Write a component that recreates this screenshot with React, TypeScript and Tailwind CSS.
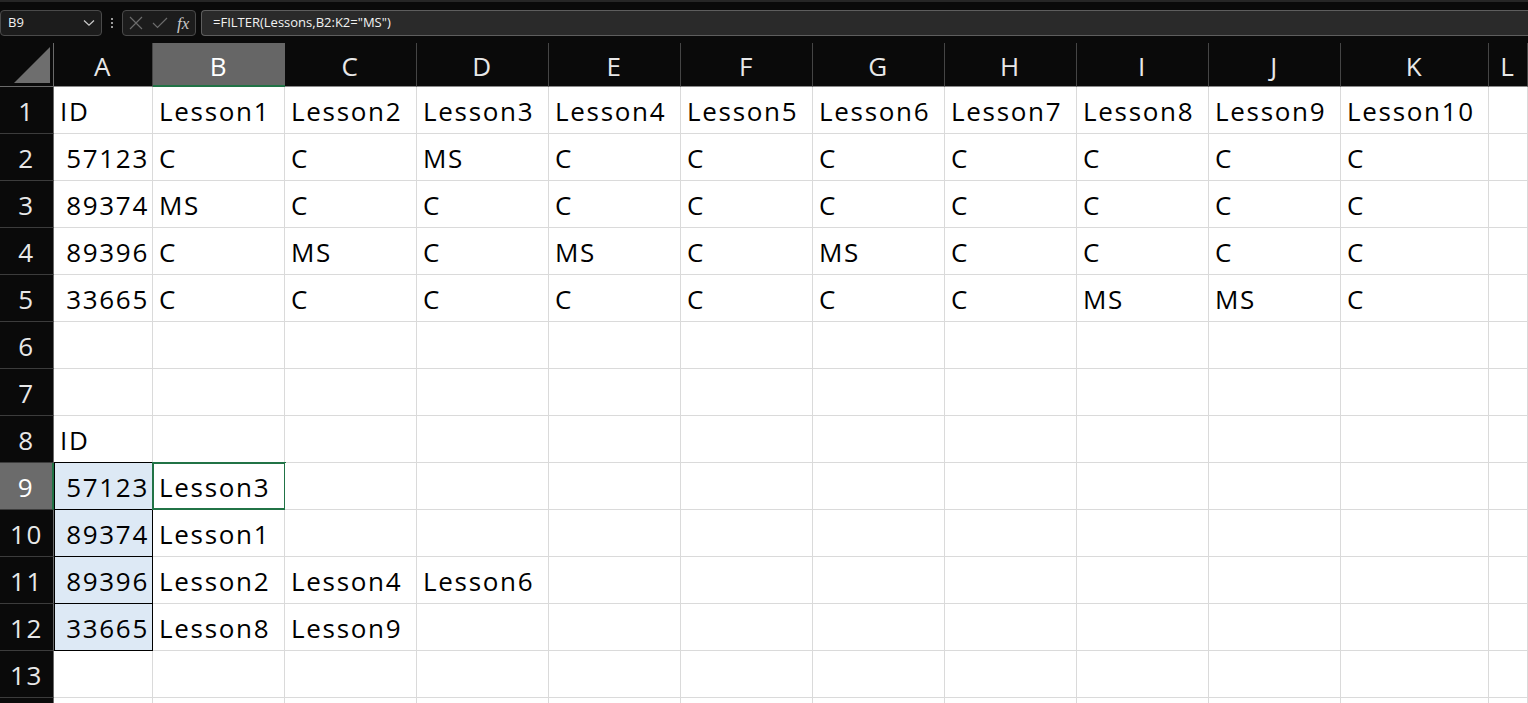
import React from "react";

const cols = ["A", "B", "C", "D", "E", "F", "G", "H", "I", "J", "K", "L"];

type Cell = { v: string; num?: boolean };

const data: Record<number, Cell[]> = {
  1: [{ v: "ID" }, ...Array.from({ length: 10 }, (_, i) => ({ v: `Lesson${i + 1}` }))],
  2: ["57123", "C", "C", "MS", "C", "C", "C", "C", "C", "C", "C"].map((v, i) => ({ v, num: i === 0 })),
  3: ["89374", "MS", "C", "C", "C", "C", "C", "C", "C", "C", "C"].map((v, i) => ({ v, num: i === 0 })),
  4: ["89396", "C", "MS", "C", "MS", "C", "MS", "C", "C", "C", "C"].map((v, i) => ({ v, num: i === 0 })),
  5: ["33665", "C", "C", "C", "C", "C", "C", "C", "MS", "MS", "C"].map((v, i) => ({ v, num: i === 0 })),
  8: [{ v: "ID" }],
  9: [{ v: "57123", num: true }, { v: "Lesson3" }],
  10: [{ v: "89374", num: true }, { v: "Lesson1" }],
  11: [{ v: "89396", num: true }, { v: "Lesson2" }, { v: "Lesson4" }, { v: "Lesson6" }],
  12: [{ v: "33665", num: true }, { v: "Lesson8" }, { v: "Lesson9" }],
};

const rows = Array.from({ length: 14 }, (_, i) => i + 1);
const spill = [9, 10, 11, 12];

function FormulaBar() {
  return (
    <div className="flex h-[41px] shrink-0 items-start pt-[8px] font-['Open_Sans',sans-serif] text-[13px] text-[#f2f2f2]">
      {/* name box */}
      <div className="flex h-[26px] w-[102px] items-center justify-between rounded-[4px] border border-[#4a4a4a] bg-[#1c1c1c] pl-[7px] pr-[6px]">
        <span>B9</span>
        <svg width="12" height="8" viewBox="0 0 12 8" fill="none" stroke="#c8c8c8" strokeWidth="1.3">
          <path d="M1 1.5 L6 6.2 L11 1.5" />
        </svg>
      </div>
      {/* vertical dots */}
      <div className="flex h-[26px] w-[20px] flex-col items-center justify-center gap-[2px]">
        <span className="h-[2px] w-[2px] bg-[#9a9a9a]" />
        <span className="h-[2px] w-[2px] bg-[#9a9a9a]" />
        <span className="h-[2px] w-[2px] bg-[#9a9a9a]" />
      </div>
      {/* cancel / enter / fx */}
      <div className="flex h-[26px] w-[74px] items-center gap-[9px] rounded-[4px] border border-[#4a4a4a] bg-[#1c1c1c] pl-[6px]">
        <svg width="14" height="14" viewBox="0 0 14 14" fill="none" stroke="#6c6c6c" strokeWidth="1.2">
          <path d="M1 1 L13 13 M13 1 L1 13" />
        </svg>
        <svg width="16" height="12" viewBox="0 0 16 12" fill="none" stroke="#6c6c6c" strokeWidth="1.2">
          <path d="M1 6 L5.5 10.5 L15 1" />
        </svg>
        <span className="font-['Liberation_Serif',serif] text-[17px] italic leading-none text-[#c8c8c8]">fx</span>
      </div>
      {/* formula */}
      <div className="ml-[5px] flex h-[26px] flex-1 items-center rounded-l-[4px] border border-r-0 border-[#5e5e5e] bg-[#2a2a2a] pl-[11px]">
        =FILTER(Lessons,B2:K2="MS")
      </div>
    </div>
  );
}

export default function App() {
  return (
    <div className="flex h-[703px] w-[1528px] flex-col overflow-hidden bg-[#0a0a0a]">
      <div className="h-[2px] shrink-0 bg-[#262626]" />
      <FormulaBar />

      <div className="grid grid-cols-[54px_99px_repeat(9,132px)_148px_1fr] grid-rows-[44px_repeat(14,47px)] font-['Open_Sans',sans-serif] text-[26px] tracking-[1.7px]">
        {/* corner */}
        <div className="flex items-end justify-end border-r border-b border-[#6a6a6a] pr-[3px] pb-[3px]">
          <svg width="36" height="36" viewBox="0 0 36 36">
            <path d="M36 0 L36 36 L0 36 Z" fill="#6e6e6e" />
          </svg>
        </div>
        {cols.map((c) => (
          <div
            key={c}
            className={
              c === "B"
                ? "flex items-center justify-center border-b-2 border-[#217346] bg-[#666666] pt-[4px] text-white"
                : "flex items-center justify-center border-r border-b border-r-[#454545] border-b-[#8a8a8a] pt-[4px] text-[#e8e8e8]"
            }
          >
            {c}
          </div>
        ))}

        {rows.map((r) => {
          const cells = data[r] ?? [];
          return (
            <React.Fragment key={r}>
              <div
                className={
                  r === 9
                    ? "flex items-center justify-center border-r-2 border-b border-r-[#217346] border-b-[#3c3c3c] bg-[#6b6b6b] pt-[3px] text-white"
                    : "flex items-center justify-center border-r border-b border-r-[#6a6a6a] border-b-[#3c3c3c] pt-[3px] text-[#e8e8e8]"
                }
              >
                {r < 14 ? r : ""}
              </div>
              {cols.map((c, ci) => {
                const cell = cells[ci];
                const isSpill = ci === 0 && spill.includes(r);
                const base = "relative flex items-center border-r border-b pt-[3px] text-black whitespace-nowrap";
                let cls = base + " border-[#dadada] bg-white";
                if (isSpill) cls = base + " border-l border-black bg-[#dde9f5]";
                else if (ci === 0 && r === 8) cls = base + " border-r-[#dadada] border-b-black bg-white";
                return (
                  <div key={c} className={cls + (cell?.num ? " justify-end pr-[3px]" : " pl-[6px]")}>
                    {cell?.v}
                    {r === 9 && c === "B" && (
                      <div className="pointer-events-none absolute -top-[1px] -left-[1px] -right-[2px] -bottom-[1px] border-2 border-[#217346]" />
                    )}
                  </div>
                );
              })}
            </React.Fragment>
          );
        })}
      </div>
    </div>
  );
}
